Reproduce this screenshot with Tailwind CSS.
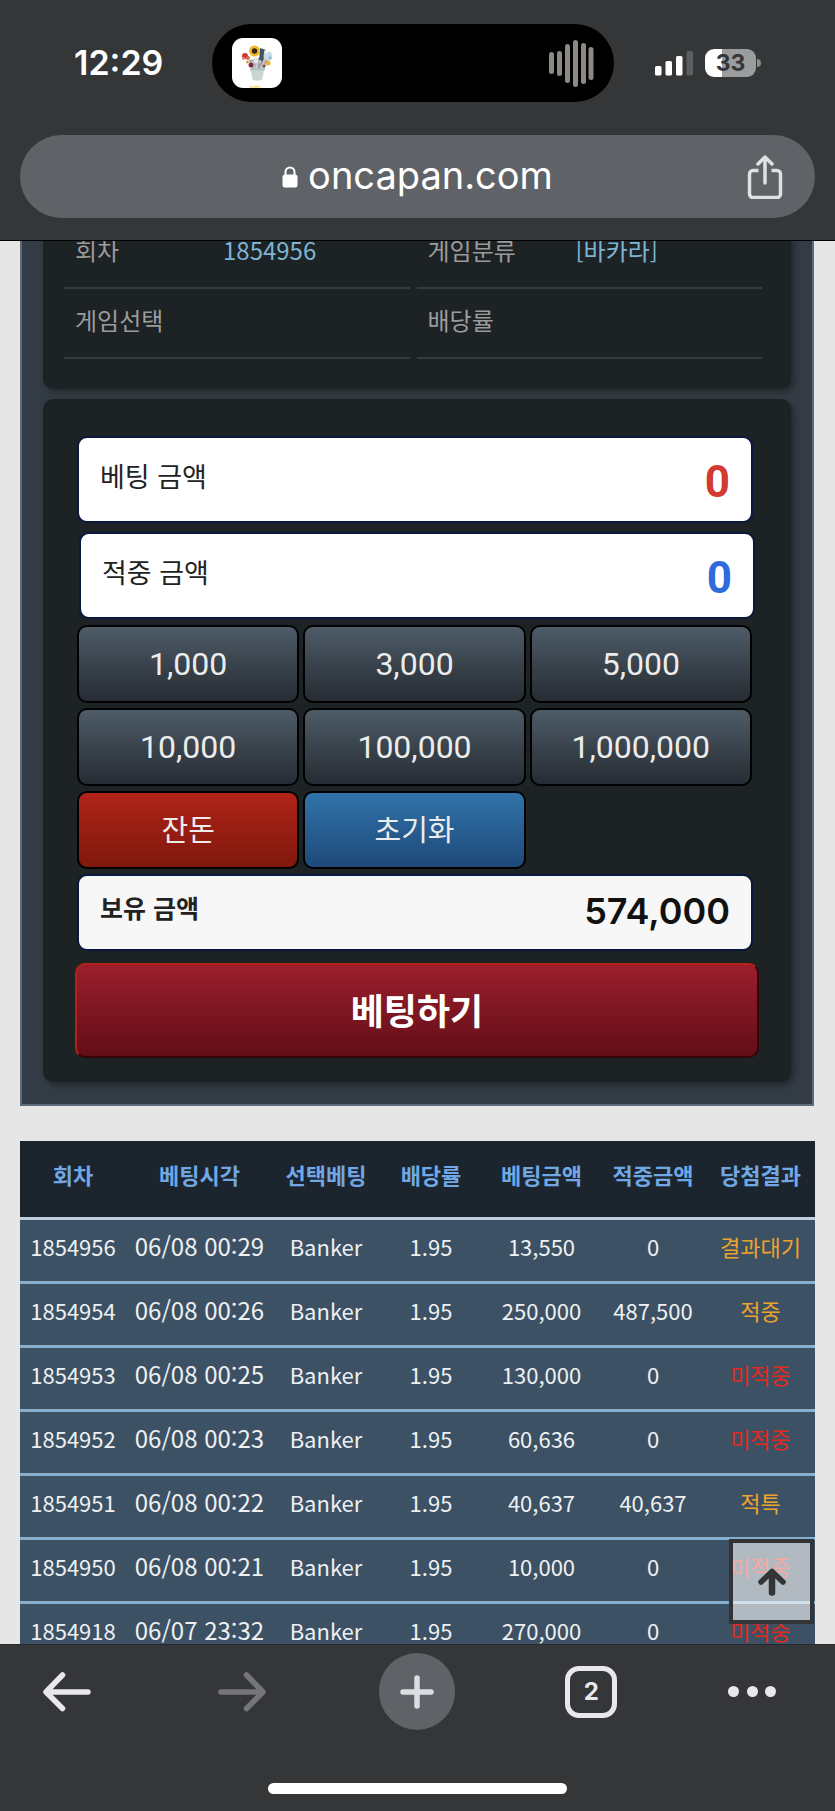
<!DOCTYPE html>
<html lang="ko">
<head>
<meta charset="utf-8">
<meta name="viewport" content="width=device-width, initial-scale=1">
<title>oncapan.com</title>
<script src="https://cdn.jsdelivr.net/npm/@tailwindcss/browser@4"></script>
</head>
<body class="flex h-screen flex-col overflow-hidden bg-[#e6e6e6] font-['Noto_Sans_CJK_KR',sans-serif]">

<header class="border-b border-black bg-[#353637] pt-6 pb-[22px] font-['Inter',sans-serif] text-white">
  <div class="grid grid-cols-[212px_1fr_221px] items-center">
    <time class="pl-[74px] text-[34px] leading-10 font-semibold">12:29</time>
    <div class="flex h-[78px] items-center justify-between rounded-full bg-black pr-5 pl-5">
      <svg class="size-[50px]" viewBox="0 0 50 50" aria-hidden="true">
        <rect width="50" height="50" rx="11" fill="#fff"/>
        <path d="M17 48.500h5l2-.7 3 .7h2v1H17z" fill="#f3d25a"/>
        <path d="M17 22l3 9h12l4-10-5-4-6 4z" fill="#a2a4a8"/>
        <path d="M28 10l6 2-1 9-3 6-3-3z" fill="#46525c"/>
        <path d="M20 23l3 8M24 20l1 11M33 20l-4 11M36 24l-6 7" stroke="#c9ccd1" stroke-width="2"/>
        <circle cx="36" cy="18" r="4.500" fill="#c5dbe8"/><circle cx="34" cy="14" r="2" fill="#eef5f8"/><circle cx="38" cy="20" r="1.500" fill="#8fb6d0"/>
        <circle cx="13" cy="18" r="3" fill="#c9392f"/><circle cx="16" cy="20" r="2" fill="#df6a52"/><circle cx="11.500" cy="20.500" r="1.500" fill="#e5968a"/>
        <circle cx="19" cy="27" r="2.500" fill="#7b2f3a"/><circle cx="15.500" cy="24" r="1.500" fill="#c8a24a"/>
        <circle cx="36" cy="25" r="2.500" fill="#e6b33d"/><circle cx="32" cy="28" r="1.500" fill="#7c4b2b"/><circle cx="24" cy="23" r="2.500" fill="#e4e4e6"/><circle cx="28" cy="24" r="2" fill="#b9bcc2"/>
        <circle cx="22.500" cy="13" r="5.500" fill="#f0b92b"/><circle cx="22.500" cy="13" r="2.700" fill="#3b2417"/>
        <path d="M18.500 30.500h14l-2.500 11c-.5 1.500-9 1.500-9.500 0z" fill="#c9d6d4"/>
        <path d="M18 30.500h15v1.800H18z" fill="#aebdbb"/>
      </svg>
      <svg class="h-[48px] w-[45px]" viewBox="0 0 45 48" aria-hidden="true" fill="#8b8982">
        <rect x="0" y="13" width="5" height="22" rx="2.500"/>
        <rect x="8" y="12" width="5" height="25" rx="2.500"/>
        <rect x="16" y="5" width="5" height="39" rx="2.500"/>
        <rect x="24" y="1" width="5" height="47" rx="2.500"/>
        <rect x="32" y="4" width="5" height="41" rx="2.500"/>
        <rect x="39.500" y="8" width="5" height="33" rx="2.500"/>
      </svg>
    </div>
    <div class="flex items-center gap-3 pl-[41px]">
      <svg class="h-[26px] w-[38px]" viewBox="0 0 38 26" aria-hidden="true" fill="#fff">
        <rect x="0" y="16" width="6.500" height="9.500" rx="1.500"/>
        <rect x="10.500" y="11" width="6.500" height="14.500" rx="1.500"/>
        <rect x="21" y="6" width="6.500" height="19.500" rx="1.500"/>
        <rect x="31.500" y="1" width="6.500" height="24.500" rx="1.500" fill="#5d5e5f"/>
      </svg>
      <div class="flex items-center gap-px">
        <div class="flex h-7 w-[51px] items-center justify-center rounded-[9px] bg-linear-to-r from-white from-33% to-[#9b9c9d] to-33% text-[23px] leading-7 font-bold text-[#353637]">33</div>
        <div class="h-2 w-1 rounded-r-full bg-[#8b8c8d]"></div>
      </div>
    </div>
  </div>

  <div class="mx-5 mt-[33px] grid h-[83px] grid-cols-[80px_1fr_80px] items-center rounded-full bg-[#5f6266]">
    <span></span>
    <a href="#" class="flex items-center justify-center gap-2.5 text-[38px] leading-[50px]">
      <svg class="h-[22px] w-4" viewBox="0 0 16 22" aria-hidden="true">
        <path d="M3.500 10V6a4.500 4.500 0 0 1 9 0v4" fill="none" stroke="#fff" stroke-width="2"/>
        <rect x=".5" y="8.500" width="15" height="13" rx="2.500" fill="#fff"/>
      </svg>
      <span class="pb-1">oncapan.com</span>
    </a>
    <button type="button" aria-label="공유" class="flex justify-center pr-5">
      <svg class="h-11 w-9" viewBox="0 0 36 44" fill="none" stroke="#dfe0e3" stroke-width="3.500" stroke-linecap="round" stroke-linejoin="round" aria-hidden="true">
        <path d="M18 28V3M11 9l7-7 7 7"/>
        <path d="M11.500 15.500H6A3.500 3.500 0 0 0 2.500 19v20A3.500 3.500 0 0 0 6 42.500h24a3.500 3.500 0 0 0 3.500-3.500V19a3.500 3.500 0 0 0-3.500-3.500h-5.500" stroke-linecap="butt"/>
      </svg>
    </button>
  </div>
</header>

<main class="relative flex-1 overflow-hidden pr-[21px] pl-5">
  <div class="-mt-[34px] border-2 border-[#5c6c7a] bg-[#333c44] px-[21px] pb-[22px]">
    <section class="rounded-b-[10px] bg-[#1d2225] pt-2.5 pr-[29px] pb-[30px] pl-[21px] shadow-[3px_3px_6px_rgba(0,0,0,0.35)]">
      <dl class="grid grid-cols-2 gap-x-[7px] text-2xl text-[#9b9b9b]">
        <div class="flex h-[70px] border-b-2 border-[#343b42] pl-[11px] leading-[61px]"><dt class="w-[148px]">회차</dt><dd class="text-[#7db4d3]">1854956</dd></div>
        <div class="flex h-[70px] border-b-2 border-[#343b42] pl-[11px] leading-[61px]"><dt class="w-[148px]">게임분류</dt><dd class="text-[#7db4d3]">[바카라]</dd></div>
        <div class="flex h-[70px] border-b-2 border-[#343b42] pl-[11px] leading-[61px]"><dt class="w-[148px]">게임선택</dt><dd></dd></div>
        <div class="flex h-[70px] border-b-2 border-[#343b42] pl-[11px] leading-[61px]"><dt class="w-[148px]">배당률</dt><dd></dd></div>
      </dl>
    </section>

    <form class="mt-2.5 rounded-[10px] bg-[#1d2225] pt-[37px] pr-8 pb-6 pl-8 shadow-[3px_3px_6px_rgba(0,0,0,0.35)]">
      <div class="mr-1.5 ml-0.5 flex h-[87px] justify-between rounded-[10px] border-2 border-[#0a1740] bg-white px-[21px]">
        <label for="stake" class="text-[27px] leading-[76px] text-[#222]">베팅 금액</label>
        <output id="stake" class="font-['Roboto',sans-serif] text-[44px] leading-[88px] font-bold text-[#d33a31]">0</output>
      </div>
      <div class="mt-[9px] mr-1 ml-1 flex h-[87px] justify-between rounded-[10px] border-2 border-[#0a1740] bg-white px-[21px]">
        <label for="win" class="text-[27px] leading-[76px] text-[#222]">적중 금액</label>
        <output id="win" class="font-['Roboto',sans-serif] text-[44px] leading-[88px] font-bold text-[#2f6bdb]">0</output>
      </div>

      <div class="mt-1.5 mr-[7px] ml-0.5 grid grid-cols-3 gap-x-1 gap-y-[5px] text-[#ececec]">
        <button type="button" class="h-[78px] rounded-[10px] border-2 border-black bg-linear-to-b from-[#4e5c68] to-[#262c33] font-['Roboto',sans-serif] text-[32px]">1,000</button>
        <button type="button" class="h-[78px] rounded-[10px] border-2 border-black bg-linear-to-b from-[#4e5c68] to-[#262c33] font-['Roboto',sans-serif] text-[32px]">3,000</button>
        <button type="button" class="h-[78px] rounded-[10px] border-2 border-black bg-linear-to-b from-[#4e5c68] to-[#262c33] font-['Roboto',sans-serif] text-[32px]">5,000</button>
        <button type="button" class="h-[78px] rounded-[10px] border-2 border-black bg-linear-to-b from-[#4e5c68] to-[#262c33] font-['Roboto',sans-serif] text-[32px]">10,000</button>
        <button type="button" class="h-[78px] rounded-[10px] border-2 border-black bg-linear-to-b from-[#4e5c68] to-[#262c33] font-['Roboto',sans-serif] text-[32px]">100,000</button>
        <button type="button" class="h-[78px] rounded-[10px] border-2 border-black bg-linear-to-b from-[#4e5c68] to-[#262c33] font-['Roboto',sans-serif] text-[32px]">1,000,000</button>
        <button type="button" class="h-[78px] rounded-[10px] border-2 border-black bg-linear-to-b from-[#b12318] to-[#80180d] pb-0.5 text-[29px]">잔돈</button>
        <button type="button" class="h-[78px] rounded-[10px] border-2 border-black bg-linear-to-b from-[#3173aa] to-[#1e497a] pb-0.5 text-[29px]">초기화</button>
      </div>

      <div class="mt-[5px] mr-1.5 ml-0.5 flex h-[77px] justify-between rounded-[10px] border-2 border-[#0a1740] bg-[#f7f7f7] px-[21px]">
        <label for="balance" class="text-[25px] leading-[62px] font-bold text-[#222]">보유 금액</label>
        <output id="balance" class="font-['Inter',sans-serif] text-4xl leading-[70px] font-semibold text-[#111]">574,000</output>
      </div>

      <button type="submit" class="mt-3 block h-[95px] w-full rounded-[10px] border-2 border-t-[#b12318] border-r-[#350406] border-b-[#350406] border-l-[#b12318] bg-linear-to-b from-[#9b1f2d] to-[#620e18] pb-1 text-4xl font-bold text-white">베팅하기</button>
    </form>
  </div>

  <table class="mt-[35px] w-full table-fixed border-collapse text-center text-[22px] text-[#eef0f2]">
    <colgroup>
      <col class="w-[106px]"><col class="w-[147px]"><col class="w-[106px]"><col class="w-[104px]"><col class="w-[117px]"><col class="w-[106px]"><col class="w-[109px]">
    </colgroup>
    <thead class="bg-[#1c252e] text-[#6fa8e4]">
      <tr class="h-[77px] border-b-3 border-[#bccfe0]">
        <th class="pb-2 font-bold">회차</th><th class="pb-2 font-bold">베팅시각</th><th class="pb-2 font-bold">선택베팅</th><th class="pb-2 font-bold">배당률</th><th class="pb-2 font-bold">베팅금액</th><th class="pb-2 font-bold">적중금액</th><th class="pb-2 font-bold">당첨결과</th>
      </tr>
    </thead>
    <tbody class="bg-[#3d5164] leading-[50px]">
      <tr class="h-16 border-b-3 border-[#86aecd]"><td class="pb-2">1854956</td><td class="pb-2 text-2xl leading-[50px] whitespace-nowrap">06/08 00:29</td><td class="pb-2">Banker</td><td class="pb-2">1.95</td><td class="pb-2">13,550</td><td class="pb-2">0</td><td class="pb-2 text-[#eea32c]">결과대기</td></tr>
      <tr class="h-16 border-b-3 border-[#86aecd]"><td class="pb-2">1854954</td><td class="pb-2 text-2xl leading-[50px] whitespace-nowrap">06/08 00:26</td><td class="pb-2">Banker</td><td class="pb-2">1.95</td><td class="pb-2">250,000</td><td class="pb-2">487,500</td><td class="pb-2 text-[#eea32c]">적중</td></tr>
      <tr class="h-16 border-b-3 border-[#86aecd]"><td class="pb-2">1854953</td><td class="pb-2 text-2xl leading-[50px] whitespace-nowrap">06/08 00:25</td><td class="pb-2">Banker</td><td class="pb-2">1.95</td><td class="pb-2">130,000</td><td class="pb-2">0</td><td class="pb-2 text-[#e4291e]">미적중</td></tr>
      <tr class="h-16 border-b-3 border-[#86aecd]"><td class="pb-2">1854952</td><td class="pb-2 text-2xl leading-[50px] whitespace-nowrap">06/08 00:23</td><td class="pb-2">Banker</td><td class="pb-2">1.95</td><td class="pb-2">60,636</td><td class="pb-2">0</td><td class="pb-2 text-[#e4291e]">미적중</td></tr>
      <tr class="h-16 border-b-3 border-[#86aecd]"><td class="pb-2">1854951</td><td class="pb-2 text-2xl leading-[50px] whitespace-nowrap">06/08 00:22</td><td class="pb-2">Banker</td><td class="pb-2">1.95</td><td class="pb-2">40,637</td><td class="pb-2">40,637</td><td class="pb-2 text-[#eea32c]">적특</td></tr>
      <tr class="h-16 border-b-3 border-[#86aecd]"><td class="pb-2">1854950</td><td class="pb-2 text-2xl leading-[50px] whitespace-nowrap">06/08 00:21</td><td class="pb-2">Banker</td><td class="pb-2">1.95</td><td class="pb-2">10,000</td><td class="pb-2">0</td><td class="pb-2 text-[#e4291e]">미적중</td></tr>
      <tr class="h-16 border-b-3 border-[#86aecd]"><td class="pb-2">1854918</td><td class="pb-2 text-2xl leading-[50px] whitespace-nowrap">06/07 23:32</td><td class="pb-2">Banker</td><td class="pb-2">1.95</td><td class="pb-2">270,000</td><td class="pb-2">0</td><td class="pb-2 text-[#e4291e]">미적중</td></tr>
    </tbody>
  </table>

  <button type="button" aria-label="맨 위로" class="absolute right-[21px] bottom-5 flex size-[85px] items-center justify-center border-4 border-[#333436] bg-white/60">
    <svg class="h-7 w-7" viewBox="0 0 28 28" fill="none" stroke="#333436" stroke-linecap="round" stroke-linejoin="round" aria-hidden="true">
      <path d="M14 24.500V5" stroke-width="6.500"/><path d="M3 14L14 3.500 25 14" stroke-width="5.500"/>
    </svg>
  </button>
</main>

<footer class="h-[167px] border-t border-[#26282d] bg-[#353638] pt-2">
  <nav class="flex items-center justify-between pr-[59px] pl-[29px]">
    <button type="button" aria-label="뒤로" class="flex h-[77px] w-[76px] items-center justify-center">
      <svg class="h-10 w-12" viewBox="0 0 48 40" fill="none" stroke="#e8e8ec" stroke-width="5.500" stroke-linecap="round" stroke-linejoin="round" aria-hidden="true"><path d="M45 20H3.500M19.500 3L3 20 19.500 36.500"/></svg>
    </button>
    <button type="button" aria-label="앞으로" class="flex h-[77px] w-[76px] items-center justify-center">
      <svg class="h-10 w-12" viewBox="0 0 48 40" fill="none" stroke="#757678" stroke-width="5.500" stroke-linecap="round" stroke-linejoin="round" aria-hidden="true"><path d="M3 20H44.500M28.500 3L45 20 28.500 36.500"/></svg>
    </button>
    <button type="button" aria-label="새 탭" class="flex h-[77px] w-[76px] items-center justify-center rounded-full bg-[#5f6266]">
      <svg class="size-[34px]" viewBox="0 0 34 34" fill="none" stroke="#dcdde2" stroke-width="5.500" stroke-linecap="round" aria-hidden="true"><path d="M17 3v28M3 17h28"/></svg>
    </button>
    <button type="button" aria-label="탭 2개" class="flex h-[77px] w-[76px] items-center justify-center">
      <span class="flex size-[52px] items-center justify-center rounded-[14px] border-[5px] border-[#e8e8ec] font-['Inter',sans-serif] text-2xl font-bold text-[#e8e8ec]">2</span>
    </button>
    <button type="button" aria-label="메뉴" class="flex h-[77px] w-12 items-center justify-between">
      <span class="size-[11px] rounded-full bg-[#e8e8ec]"></span><span class="size-[11px] rounded-full bg-[#e8e8ec]"></span><span class="size-[11px] rounded-full bg-[#e8e8ec]"></span>
    </button>
  </nav>
  <div class="mx-auto mt-[53px] h-[11px] w-[299px] rounded-full bg-white"></div>
</footer>
</body>
</html>
